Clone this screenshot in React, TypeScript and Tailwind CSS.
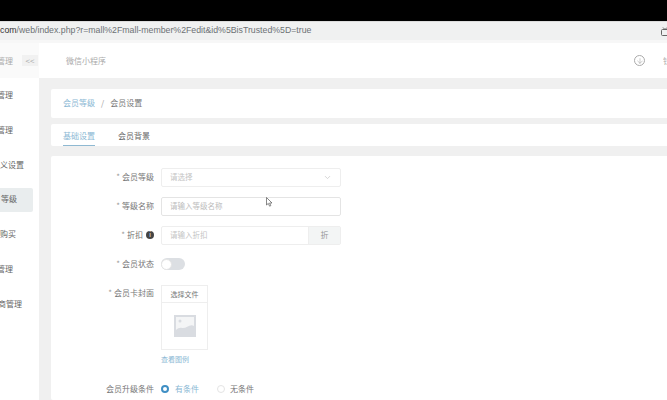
import { ChevronDown, ArrowDown } from "lucide-react";

const font = { fontFamily: '"Noto Sans CJK SC", "Liberation Sans", sans-serif' };

function Star() {
  return <span className="text-[#999] mr-[2px]">*</span>;
}

function Field({ label, className, children }: { label: React.ReactNode; className: string; children: React.ReactNode }) {
  return (
    <div className={`flex items-center ${className}`}>
      <div className="w-[161px] shrink-0 pr-[7px] flex justify-end items-center text-[8px] text-[#777]">{label}</div>
      {children}
    </div>
  );
}

const sideItems = [
  { text: "管理", cls: "h-[35px] pr-[20px]" },
  { text: "管理", cls: "h-[35px] pr-[20px]" },
  { text: "义设置", cls: "h-[35px] pr-[9px]" },
  { text: "等级", cls: "h-[24px] my-[5px] pr-[16px] bg-[#e9edee] rounded-r-[2px]" },
  { text: "购买", cls: "h-[35px] pr-[17px]" },
  { text: "管理", cls: "h-[35px] pr-[20px]" },
  { text: "商管理", cls: "h-[35px] pr-[11px]" },
];

export default function App() {
  return (
    <div className="w-[667px] h-[400px] overflow-hidden bg-white flex flex-col" style={font}>
      {/* Browser chrome */}
      <div className="h-[21px] bg-black shrink-0" />
      <div className="h-[1px] bg-[#dcdcdc] shrink-0" />
      <div className="h-[18px] bg-[#f0f1f1] shrink-0 flex items-center justify-between overflow-hidden">
        <span className="text-[8.75px] text-[#6d7275] whitespace-nowrap" style={{ fontFamily: '"Liberation Sans", sans-serif' }}>
          <span className="text-[#333]">com</span>/web/index.php?r=mall%2Fmall-member%2Fedit&amp;id%5BisTrusted%5D=true
        </span>
        <svg width="8" height="9" viewBox="0 0 8 9" fill="none" stroke="#666" strokeWidth="1" className="mr-[-2px]">
          <rect x="0.5" y="2.5" width="8" height="6" rx="1" />
          <path d="M2 0.5 L4 2.5 L6 0.5" />
        </svg>
      </div>
      <div className="h-[3px] bg-[#f7f7f7] shrink-0" />

      <div className="flex flex-1 min-h-0">
        {/* Sidebar */}
        <div className="w-[39px] shrink-0 bg-white flex flex-col overflow-hidden">
          <div className="h-[35px] flex items-center justify-end shrink-0 bg-[#fafafa] pr-[1px] gap-[9px]">
            <span className="text-[8px] text-[#aaa] whitespace-nowrap shrink-0">管理</span>
            <span className="w-[16px] h-[11px] shrink-0 bg-[#f1f1f1] text-[8px] text-[#aaa] leading-[11px] text-center">&lt;&lt;</span>
          </div>
          <div className="flex flex-col pr-[6px]">
            {sideItems.map((item, i) => (
              <div key={i} className={`${item.cls} pb-[2px] shrink-0 flex items-center justify-end text-[8px] text-[#666] whitespace-nowrap`}>
                {item.text}
              </div>
            ))}
          </div>
        </div>

        {/* Main */}
        <div className="flex-1 min-w-0 flex flex-col bg-[#f0f0f0]">
          <div className="h-[35px] bg-white shrink-0 flex items-center justify-between pl-[27px]">
            <span className="text-[8px] text-[#aaa]">微信小程序</span>
            <div className="flex items-center gap-[18px] mr-[-2px]">
              <span className="w-[11px] h-[11px] rounded-full border border-[#aaa] flex items-center justify-center">
                <ArrowDown size={8} color="#999" strokeWidth={1.5} />
              </span>
              <span className="text-[8px] text-[#aaa] w-[6px] overflow-hidden whitespace-nowrap">钱包</span>
            </div>
          </div>
          <div className="pl-[12px] pt-[11px] flex flex-col flex-1 min-h-0">
            <div className="h-[29px] bg-white rounded-l-[2px] shrink-0 flex items-center pl-[12px] pb-[1px] text-[8px] text-[#777]">
              <span className="text-[#8ab8d4]">会员等级</span>
              <span className="mx-[6px] text-[#999]">/</span>
              <span>会员设置</span>
            </div>
            <div className="h-[22px] mt-[6px] bg-white rounded-l-[2px] shrink-0 flex items-stretch pl-[12px] text-[8px] text-[#666]">
              <span className="w-[32px] pt-[1px] text-center text-[#8ab8d4] border-b border-[#8fb9d2] leading-[21px] mr-[23px] whitespace-nowrap">基础设置</span>
              <span className="pt-[1px] leading-[21px]">会员背景</span>
            </div>
            <div className="flex-1 mt-[10px] bg-white rounded-l-[2px] min-h-0 overflow-hidden flex flex-col">
              <div className="ml-[-51px] pt-[11px] flex flex-col">
                <Field label={<span><Star />会员等级</span>} className="h-[20px]">
                  <div className="w-[180px] h-[19px] border border-[#eeeeee] rounded-[2px] flex items-center justify-between px-[8px]">
                    <span className="text-[7.5px] text-[#c4c4c4]">请选择</span>
                    <ChevronDown size={9} color="#c8c8c8" />
                  </div>
                </Field>
                <Field label={<span><Star />等级名称</span>} className="h-[20px] mt-[9px]">
                  <div className="w-[180px] h-[19px] border border-[#e4e4e4] rounded-[2px] flex items-center px-[8px]">
                    <span className="text-[7.5px] text-[#bcbcbc]">请输入等级名称</span>
                  </div>
                </Field>
                <Field
                  label={
                    <span className="flex items-center">
                      <Star />折扣
                      <span className="ml-[3px] w-[8px] h-[8px] rounded-full bg-[#444] text-white text-[6px] leading-[8px] text-center">i</span>
                    </span>
                  }
                  className="h-[20px] mt-[9px]"
                >
                  <div className="w-[180px] h-[19px] border border-[#eeeeee] rounded-[2px] flex items-center justify-between pl-[8px]">
                    <span className="text-[7.5px] text-[#c4c4c4]">请输入折扣</span>
                    <span className="w-[32px] h-full bg-[#f3f5f5] border-l border-[#eeeeee] text-[8px] text-[#999] flex items-center justify-center">折</span>
                  </div>
                </Field>
                <Field label={<span><Star />会员状态</span>} className="h-[20px] mt-[9px]">
                  <div className="w-[24px] h-[12px] rounded-full bg-[#dcdfe3] flex items-center">
                    <div className="w-[11px] h-[11px] rounded-full bg-white border border-[#e4e4e4]" />
                  </div>
                </Field>
                <div className="flex mt-[11px]">
                  <div className="w-[161px] shrink-0 pr-[7px] flex justify-end text-[8px] text-[#777] pt-[1px] leading-[13px]">
                    <span><Star />会员卡封面</span>
                  </div>
                  <div className="flex flex-col">
                    <div className="w-[47px] border border-[#eeeeee] flex flex-col">
                      <div className="h-[17px] border-b border-[#eeeeee] text-[7px] text-[#777] flex items-center justify-center">选择文件</div>
                      <div className="h-[46px] flex items-center justify-center">
                        <svg width="22" height="22" viewBox="0 0 22 22">
                          <rect width="22" height="22" fill="#d9dce1" />
                          <path d="M2 2 H20 V11 C16 8 12 14 8 13 C6 12.5 4 13 2 15 Z" fill="#f4f5f6" />
                          <circle cx="6" cy="6" r="1.5" fill="#d9dce1" />
                        </svg>
                      </div>
                    </div>
                    <span className="mt-[3px] text-[7px] text-[#8ab8d4] leading-[12px]">查看图例</span>
                  </div>
                </div>
                <div className="flex items-center mt-[17px] h-[14px]">
                  <div className="w-[161px] shrink-0 pr-[7px] flex justify-end text-[8px] text-[#777]">会员升级条件</div>
                  <span className="w-[8px] h-[8px] rounded-full border-[2.5px] border-[#3f8fc4] bg-white" />
                  <span className="ml-[6px] text-[8px] text-[#8ab8d4]">有条件</span>
                  <span className="ml-[18px] w-[8px] h-[8px] rounded-full border border-[#e4e4e4]" />
                  <span className="ml-[5px] text-[8px] text-[#777]">无条件</span>
                </div>
              </div>
            </div>
          </div>
        </div>
      </div>

      {/* Mouse pointer in the screen recording */}
      <svg width="7" height="10" viewBox="0 0 7 10" className="absolute left-[266px] top-[197px]">
        <path d="M0.5 0.5 V8 L2.3 6.4 L3.6 9.2 L4.8 8.6 L3.6 6 H6 Z" fill="#fff" stroke="#555" strokeWidth="0.7" />
      </svg>
    </div>
  );
}
